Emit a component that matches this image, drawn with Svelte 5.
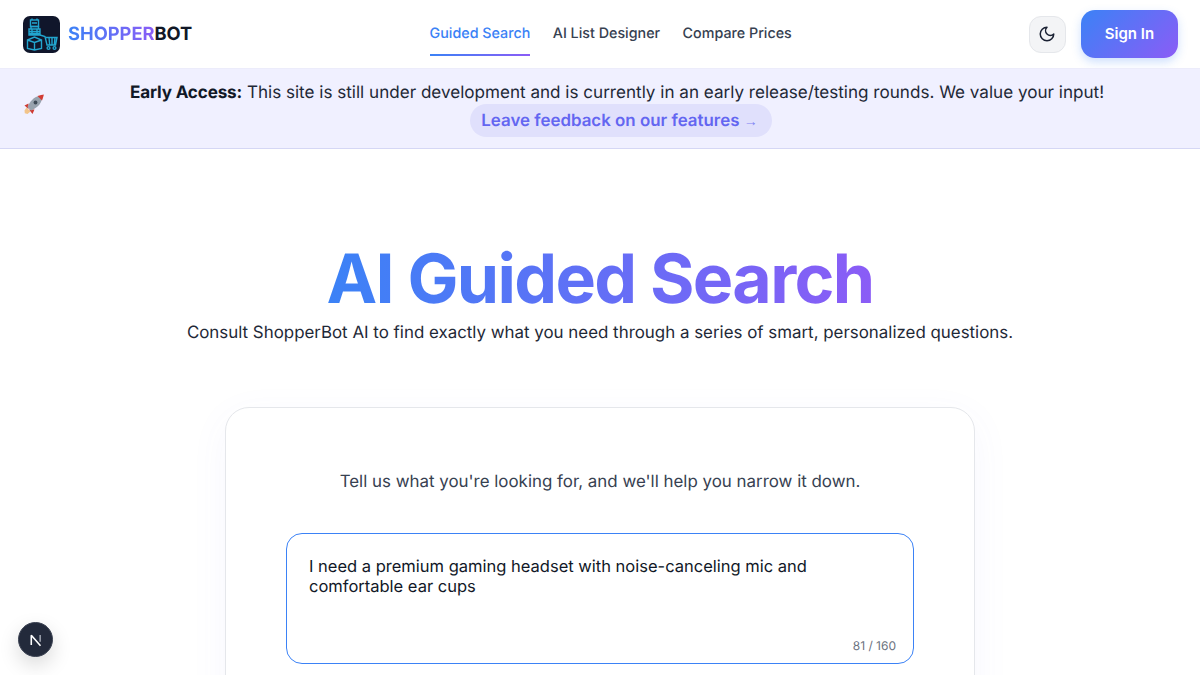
<script lang="ts">
  const links = ["Guided Search", "AI List Designer", "Compare Prices"];
  const query =
    "I need a premium gaming headset with noise-canceling mic and comfortable ear cups";
  const limit = 160;
</script>

<div class="page">
  <header class="topbar">
    <a class="brand" href="#top">
      <svg class="logo" viewBox="0 0 37 37" width="37" height="37" aria-hidden="true">
        <rect width="37" height="37" rx="7" fill="#10162b" />
        <g fill="none" stroke="#22a6d0" stroke-width="1.400">
          <rect x="7.500" y="4" width="8" height="6.500" />
          <path d="M9 7h5M9 4V2.500M14 4V2.500" />
          <path d="M8 10.500h7.500v2.500H8zM6 13h11v6H6zM6 15.500h11M6 17.500h11M9 13v6M14 13v6" />
          <path d="M4.500 24l7-3 7 3v8.500l-7 1.500-7-1.500zM11.500 26.500V34M4.500 24l7 2.500 7-2.500" />
          <path d="M17 19l5 1.500 2 8.500h8.500l1.500-7.500H23M26 21.500l.7 7.500M29 21.500v7.500M32 21.500l-.7 7.500" />
          <circle cx="25.500" cy="32" r="1.400" />
          <circle cx="31.500" cy="32" r="1.400" />
        </g>
      </svg>
      <span class="wordmark"><span class="grad">SHOPPER</span>BOT</span>
    </a>

    <nav class="links">
      {#each links as link, i}
        <a href="#top" class:active={i === 0}>{link}</a>
      {/each}
    </nav>

    <div class="actions">
      <button class="theme" aria-label="Toggle theme">
        <svg viewBox="0 0 24 24" width="18" height="18" fill="none" stroke="#1a2133" stroke-width="2" stroke-linecap="round" stroke-linejoin="round">
          <path d="M12 3a6 6 0 0 0 9 9 9 9 0 1 1-9-9Z" />
        </svg>
      </button>
      <button class="signin">Sign In</button>
    </div>
  </header>

  <aside class="notice">
    <svg class="rocket" viewBox="1 1 24 24" width="24" height="24" aria-hidden="true">
      <path d="M4.500 15.500 8.500 19.500 5.500 22 2.800 21.300 2.500 18.500Z" fill="#f2c48a" />
      <path d="M6.500 11.500 2.500 13.500 6.500 17ZM12.500 17.500 10.500 22 7 17.500Z" fill="#cf3a32" />
      <path d="M5.500 15C8 9 12 5 17 4L20 7C19 12 15 16 9 18.500Z" fill="#98a2ae" />
      <path d="M15.500 4C18 3 20.500 2.600 21.800 2.400 21.600 3.700 21 6 20 8.500Z" fill="#d23b33" />
      <circle cx="13.500" cy="10.500" r="1.900" fill="#3f4a57" />
    </svg>
    <div class="notice-body">
      <p><strong>Early Access:</strong> This site is still under development and is currently in an early release/testing rounds. We value your input!</p>
      <a class="feedback" href="#top">Leave feedback on our features <span class="arrow">→</span></a>
    </div>
  </aside>

  <main>
    <section class="hero">
      <h1>AI Guided Search</h1>
      <p>Consult ShopperBot AI to find exactly what you need through a series of smart, personalized questions.</p>
    </section>

    <section class="card">
      <p class="prompt">Tell us what you're looking for, and we'll help you narrow it down.</p>
      <div class="field">
        <div class="input">{query}</div>
        <span class="count">{query.length} / {limit}</span>
      </div>
    </section>
  </main>

  <button class="dev" aria-label="Open Next.js Dev Tools">
    <svg viewBox="0 0 16 16" width="18" height="18" fill="none" stroke-width="1.400">
      <path d="M3.800 12.500V3.700L12 13.200" stroke="#fff" stroke-linejoin="bevel" />
      <path d="M11.700 3.500V9.500" stroke="#9aa0ab" />
    </svg>
  </button>
</div>

<style>
  :global(body) {
    overflow: hidden;
    background: #fff;
  }

  .page {
    height: 675px;
    overflow: hidden;
    display: flex;
    flex-direction: column;
    font-family: Inter, "Liberation Sans", sans-serif;
    color: #111827;
    text-rendering: geometricPrecision;
  }

  .topbar {
    flex: none;
    height: 68px;
    box-sizing: border-box;
    padding: 0 22px 0 23px;
    display: flex;
    justify-content: space-between;
    align-items: center;
    background: #fff;
  }

  .brand {
    display: flex;
    align-items: center;
    gap: 8px;
    text-decoration: none;
  }

  .logo {
    display: block;
  }

  .wordmark {
    font-size: 18.300px;
    font-weight: 700;
    color: #111827;
  }

  .grad {
    background: linear-gradient(90deg, #3b82f6, #8b5cf6);
    -webkit-background-clip: text;
    background-clip: text;
    color: transparent;
  }

  .links {
    display: flex;
    gap: 22.500px;
    height: 68px;
    box-sizing: border-box;
    padding-top: 12px;
  }

  .links a {
    position: relative;
    display: block;
    padding: 12px 0;
    height: 44px;
    box-sizing: border-box;
    font-size: 14.300px;
    line-height: 19px;
    font-weight: 500;
    color: #374151;
    text-decoration: none;
  }

  .links a.active {
    color: #3b82f6;
  }

  .links a.active::after {
    content: "";
    position: absolute;
    left: 0;
    right: 0;
    bottom: 0;
    height: 2px;
    background: linear-gradient(90deg, #3b82f6, #8b5cf6);
  }

  .actions {
    display: flex;
    justify-content: flex-end;
    align-items: center;
    gap: 15px;
  }

  .theme {
    width: 37px;
    height: 37px;
    padding: 0;
    display: grid;
    place-items: center;
    background: #f3f4f6;
    border: 1px solid #e5e7eb;
    border-radius: 12px;
  }

  .signin {
    width: 97px;
    height: 48px;
    padding-bottom: 2px;
    border: 0;
    border-radius: 14px;
    font: 600 15px Inter, sans-serif;
    color: #fff;
    background: linear-gradient(135deg, #3b82f6, #8b5cf6);
    box-shadow: 0 4px 10px rgba(59, 130, 246, 0.25);
  }

  .notice {
    flex: none;
    height: 81px;
    box-sizing: border-box;
    padding: 13px 13px 0 23px;
    display: flex;
    background: #f0f0ff;
    border-top: 1px solid #ececfb;
    border-bottom: 1px solid #d5d7f5;
  }

  .rocket {
    flex: none;
    margin-top: 11px;
  }

  .notice-body {
    flex: 1;
    display: flex;
    flex-direction: column;
    align-items: center;
  }

  .notice-body p {
    margin: 0;
    font-size: 17.080px;
    line-height: 22px;
    color: #1f2937;
  }

  .notice-body strong {
    font-weight: 700;
    letter-spacing: -0.15px;
    color: #111827;
  }

  .feedback {
    display: block;
    margin-left: 8px;
    padding: 5px 14px 3px 11px;
    font-size: 16.900px;
    line-height: 25px;
    font-weight: 600;
    color: #6366f1;
    text-decoration: none;
    background: #e0e0fc;
    border-radius: 999px;
  }

  .arrow {
    font-family: "Liberation Sans", sans-serif;
    font-size: 14px;
    color: #7f83f3;
  }

  main {
    flex: 1;
    display: flex;
    flex-direction: column;
    align-items: center;
    background: #fff;
  }

  .hero {
    padding-top: 88px;
    text-align: center;
  }

  .hero h1 {
    margin: 0;
    font-size: 68px;
    line-height: 84px;
    font-weight: 700;
    letter-spacing: -1.660px;
    width: fit-content;
    margin-inline: auto;
    background: linear-gradient(90deg, #3b82f6, #8b5cf6);
    -webkit-background-clip: text;
    background-clip: text;
    color: transparent;
  }

  .hero p {
    margin: 0;
    font-size: 16.900px;
    line-height: 24px;
    color: #1f2937;
  }

  .card {
    width: 750px;
    box-sizing: border-box;
    margin-top: 62px;
    padding: 61px 60px 120px;
    background: #fff;
    border: 1px solid #e5e7eb;
    border-radius: 24px;
    box-shadow: 0 10px 40px rgba(99, 102, 241, 0.05);
  }

  .prompt {
    margin: 0 0 38px;
    text-align: center;
    font-size: 16.900px;
    line-height: 26px;
    color: #374151;
  }

  .field {
    position: relative;
    height: 131px;
    box-sizing: border-box;
    padding: 22px 22px 0;
    border: 1px solid #3b82f6;
    border-radius: 16px;
  }

  .input {
    font-size: 16.500px;
    line-height: 20px;
    color: #111827;
  }

  .count {
    position: absolute;
    right: 17px;
    bottom: 10px;
    font-size: 12px;
    color: #6b7280;
  }

  .dev {
    position: fixed;
    left: 18px;
    bottom: 18px;
    width: 35px;
    height: 35px;
    padding: 0;
    display: grid;
    place-items: center;
    background: #232a3b;
    border: 1px solid #3b4252;
    border-radius: 50%;
    box-shadow: 0 8px 20px rgba(0, 0, 0, 0.15);
  }
</style>
